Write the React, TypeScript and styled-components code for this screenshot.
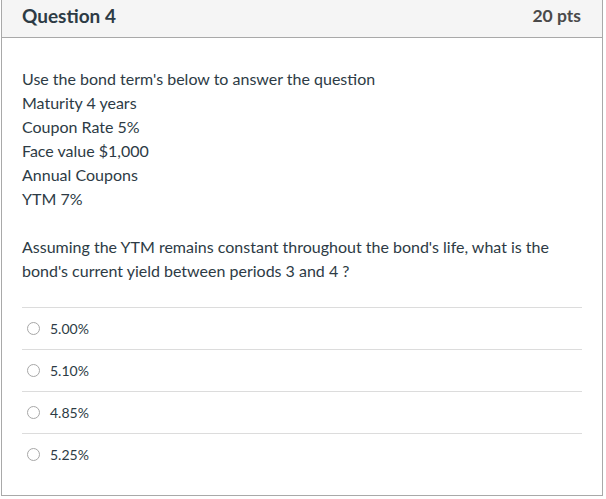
import styled, { createGlobalStyle } from 'styled-components';

const GlobalStyle = createGlobalStyle`
	* {
		box-sizing: border-box;
	}
	body {
		margin: 0;
		background: #ffffff;
		font-family: Lato, 'Open Sans', 'Liberation Sans', sans-serif;
		color: #2d3b45;
	}
`;

const Card = styled.div`
	width: 602px;
	height: 496px;
	margin-left: 1px;
	border: 1px solid #a9a9a9;
	border-top: 0;
	background: #ffffff;
`;

const Header = styled.div`
	height: 38px;
	display: flex;
	align-items: center;
	justify-content: space-between;
	padding: 0 21px 6px 20px;
	background: #f5f5f5;
	border-bottom: 1px solid #a9a9a9;
`;

const Title = styled.h2`
	margin: 0;
	font-size: 19px;
	font-weight: 700;
	color: #2d3b45;
`;

const Points = styled.span`
	font-size: 17.5px;
	font-weight: 700;
	color: #4a4a4a;
`;

const Body = styled.div`
	padding: 29px 20px 20px;
`;

const Paragraph = styled.p`
	margin: 0 0 24px;
	font-size: 16px;
	line-height: 24px;
`;

const Answers = styled.div`
	display: flex;
	flex-direction: column;
`;

const AnswerRow = styled.label`
	height: 42px;
	display: flex;
	align-items: center;
	gap: 10px;
	padding-left: 5px;
	border-top: 1px solid #dcdcdc;
	font-size: 14px;
	color: #2d3b45;
	cursor: pointer;
`;

const Radio = styled.span`
	width: 13px;
	height: 13px;
	border-radius: 50%;
	border: 1px solid #a7a7a7;
	background: #ffffff;
	flex-shrink: 0;
`;

const terms = ["Use the bond term's below to answer the question", 'Maturity 4 years', 'Coupon Rate 5%', 'Face value $1,000', 'Annual Coupons', 'YTM 7%'];

const answers = ['5.00%', '5.10%', '4.85%', '5.25%'];

const App = () => {
	return (
		<>
			<GlobalStyle />
			<Card>
				<Header>
					<Title>Question 4</Title>
					<Points>20 pts</Points>
				</Header>
				<Body>
					<Paragraph>
						{terms.map((t, i) => (
							<span key={t}>
								{t}
								{i < terms.length - 1 && <br />}
							</span>
						))}
					</Paragraph>
					<Paragraph>
						Assuming the YTM remains constant throughout the bond's life, what is the
						<br />
						bond's current yield between periods 3 and 4 ?
					</Paragraph>
					<Answers>
						{answers.map(a => (
							<AnswerRow key={a}>
								<Radio />
								{a}
							</AnswerRow>
						))}
					</Answers>
				</Body>
			</Card>
		</>
	);
};

export default App;
